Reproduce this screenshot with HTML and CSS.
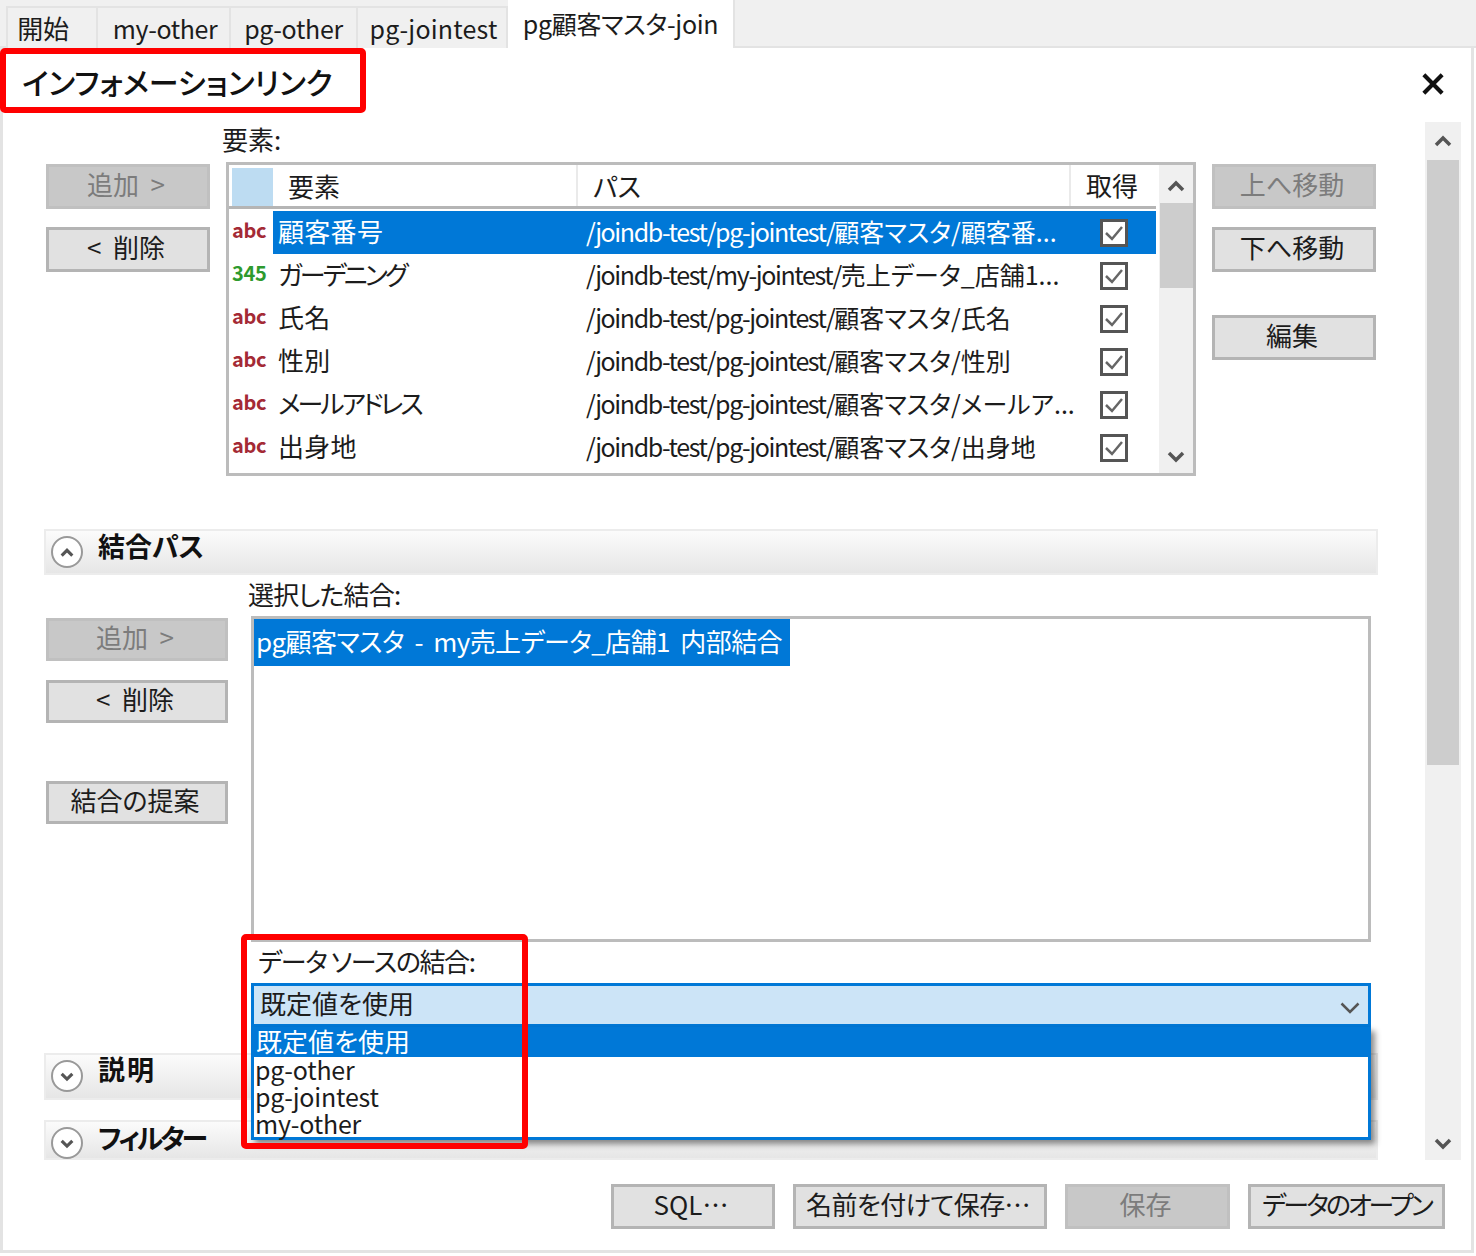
FILE: index.html
```html
<!DOCTYPE html>
<html lang="ja">
<head>
<meta charset="utf-8">
<title>インフォメーションリンク</title>
<link rel="stylesheet" href="styles.css">
</head>
<body>
<div class="app">
  <nav class="tabs">
    <div class="tab t-start">開始</div>
    <div class="tab t-my">my-other</div>
    <div class="tab t-pg">pg-other</div>
    <div class="tab t-joint">pg-jointest</div>
    <div class="tab active">pg顧客マスタ-join</div>
  </nav>
  <main class="panel">
    <header class="title-row">
      <h1 class="title">インフォメーションリンク</h1>
      <svg class="close" viewBox="0 0 24 24"><path d="M2 2 22 22M22 2 2 22"/></svg>
    </header>
    <div class="body">
      <div class="content">
        <section class="elements">
          <div class="el-buttons">
            <button class="btn disabled">追加 &nbsp;&gt;</button>
            <button class="btn">&lt;&nbsp; 削除</button>
          </div>
          <div class="el-center">
            <div class="label el-label">要素:</div>
            <div class="list">
              <div class="list-main">
                <div class="row head">
                  <div class="corner"></div>
                  <div class="cell name">要素</div>
                  <div class="cell path">パス</div>
                  <div class="cell get">取得</div>
                </div>
                <div class="row selected">
                  <div class="type abc">abc</div>
                  <div class="cell name">顧客番号</div>
                  <div class="cell path"><span class="pre">/joindb-test/pg-jointest/</span><span>顧客マスタ/顧客番...</span></div>
                  <div class="cell get"><svg class="check" viewBox="0 0 28 28"><rect x="1.5" y="1.5" width="25" height="25"/><path d="M6 14l6 6 10-12"/></svg></div>
                </div>
                <div class="row">
                  <div class="type num">345</div>
                  <div class="cell name kana">ガーデニング</div>
                  <div class="cell path"><span class="pre">/joindb-test/my-jointest/</span><span>売上データ_店舗1...</span></div>
                  <div class="cell get"><svg class="check" viewBox="0 0 28 28"><rect x="1.5" y="1.5" width="25" height="25"/><path d="M6 14l6 6 10-12"/></svg></div>
                </div>
                <div class="row">
                  <div class="type abc">abc</div>
                  <div class="cell name">氏名</div>
                  <div class="cell path"><span class="pre">/joindb-test/pg-jointest/</span><span>顧客マスタ/氏名</span></div>
                  <div class="cell get"><svg class="check" viewBox="0 0 28 28"><rect x="1.5" y="1.5" width="25" height="25"/><path d="M6 14l6 6 10-12"/></svg></div>
                </div>
                <div class="row">
                  <div class="type abc">abc</div>
                  <div class="cell name">性別</div>
                  <div class="cell path"><span class="pre">/joindb-test/pg-jointest/</span><span>顧客マスタ/性別</span></div>
                  <div class="cell get"><svg class="check" viewBox="0 0 28 28"><rect x="1.5" y="1.5" width="25" height="25"/><path d="M6 14l6 6 10-12"/></svg></div>
                </div>
                <div class="row">
                  <div class="type abc">abc</div>
                  <div class="cell name kana">メールアドレス</div>
                  <div class="cell path"><span class="pre">/joindb-test/pg-jointest/</span><span>顧客マスタ/メールア...</span></div>
                  <div class="cell get"><svg class="check" viewBox="0 0 28 28"><rect x="1.5" y="1.5" width="25" height="25"/><path d="M6 14l6 6 10-12"/></svg></div>
                </div>
                <div class="row">
                  <div class="type abc">abc</div>
                  <div class="cell name">出身地</div>
                  <div class="cell path"><span class="pre">/joindb-test/pg-jointest/</span><span>顧客マスタ/出身地</span></div>
                  <div class="cell get"><svg class="check" viewBox="0 0 28 28"><rect x="1.5" y="1.5" width="25" height="25"/><path d="M6 14l6 6 10-12"/></svg></div>
                </div>
              </div>
              <div class="scroll small">
                <svg class="arrow" viewBox="0 0 18 12"><path d="M2 10 9 3l7 7"/></svg>
                <div class="thumb small-thumb"></div>
                <div class="spacer"></div>
                <svg class="arrow" viewBox="0 0 18 12"><path d="M2 2l7 7 7-7"/></svg>
              </div>
            </div>
          </div>
          <div class="el-buttons right">
            <button class="btn disabled">上へ移動</button>
            <button class="btn">下へ移動</button>
            <button class="btn edit">編集</button>
          </div>
        </section>

        <div class="section join-head">
          <span class="circle"><svg viewBox="0 0 18 12"><path d="M3 9.500 9 3.500l6 6"/></svg></span>
          <span class="section-title">結合パス</span>
        </div>
        <section class="join">
          <div class="join-buttons">
            <button class="btn small-btn disabled">追加 &nbsp;&gt;</button>
            <button class="btn small-btn">&lt;&nbsp; 削除</button>
            <button class="btn small-btn suggest">結合の提案</button>
          </div>
          <div class="join-main">
            <div class="label join-label">選択した結合:</div>
            <div class="listbox">
              <span class="listbox-item">pg顧客マスタ&nbsp; -&nbsp; my売上データ_店舗1&nbsp; 内部結合</span>
            </div>
            <div class="label ds-label">データ ソースの結合:</div>
            <div class="combo">
              <div class="combo-box">
                <span>既定値を使用</span>
                <svg class="combo-arrow" viewBox="0 0 20 12"><path d="M1.500 1.500 10 10l8.500-8.500"/></svg>
              </div>
              <ul class="dropdown">
                <li class="opt on">既定値を使用</li>
                <li class="opt">pg-other</li>
                <li class="opt">pg-jointest</li>
                <li class="opt">my-other</li>
              </ul>
            </div>
          </div>
        </section>

        <div class="section desc">
          <span class="circle"><svg viewBox="0 0 18 12"><path d="M3 3l6 6 6-6"/></svg></span>
          <span class="section-title">説明</span>
        </div>
        <div class="section filter">
          <span class="circle"><svg viewBox="0 0 18 12"><path d="M3 3l6 6 6-6"/></svg></span>
          <span class="section-title">フィルター</span>
        </div>
      </div>
      <div class="scroll big">
        <svg class="arrow" viewBox="0 0 18 12"><path d="M2 10 9 3l7 7"/></svg>
        <div class="thumb big-thumb"></div>
        <div class="spacer"></div>
        <svg class="arrow" viewBox="0 0 18 12"><path d="M2 2l7 7 7-7"/></svg>
      </div>
    </div>
    <footer class="footer">
      <button class="btn f-sql">SQL…</button>
      <button class="btn f-save-as">名前を付けて保存…</button>
      <button class="btn f-save disabled">保存</button>
      <button class="btn f-open">データのオープン</button>
    </footer>
  </main>
  <div class="red red-title"></div>
  <div class="red red-join"></div>
</div>
</body>
</html>
```
FILE: styles.css
```css
* { box-sizing: border-box; }
html, body { margin: 0; padding: 0; background: #fff; }
body { font-family: "Noto Sans CJK JP", "Noto Sans", sans-serif; font-feature-settings: "palt"; color: #1c1c1c; font-size: 26px; }
button { font-family: inherit; font-feature-settings: inherit; color: inherit; }

.app { position: relative; width: 1476px; height: 1256px; overflow: hidden; }

/* tabs */
.tabs { display: flex; align-items: flex-end; height: 48px; background: #f0f0f0; padding-left: 6px; border-bottom: 2px solid #e3e3e3; }
.tab { height: 42px; text-align: center; line-height: 40px; font-size: 25px; letter-spacing: -.3px; background: #f0f0f0; border: 2px solid #e3e3e3; border-bottom: 0; border-left-width: 0; white-space: nowrap; margin-bottom: -2px; }
.t-start { width: 92px; border-left-width: 2px; font-size: 26px; padding-right: 18px; }
.t-my { width: 133px; padding-left: 3px; letter-spacing: -.4px; }
.t-pg { width: 127px; }
.t-joint { width: 150px; padding-left: 3px; letter-spacing: .2px; }
.tab.active { width: 227px; height: 48px; background: #fff; line-height: 47px; border-top: 0; }

/* panel */
.panel { width: 1474px; height: 1205px; background: #fff; border: 3px solid #e3e3e3; border-top: 0; }
.title-row { display: flex; justify-content: space-between; align-items: center; height: 74px; padding: 0 27px 0 19px; }
.title { margin: 0; font-size: 30px; font-weight: 500; color: #111; line-height: 36px; margin-top: -8px; white-space: nowrap; }
.close { width: 22px; height: 22px; margin-top: -3px; }
.close path { fill: none; stroke: #111; stroke-width: 4.500; }

.body { display: flex; height: 1038px; padding-left: 41px; }
.content { width: 1334px; }

/* scrollbars */
.scroll { display: flex; flex-direction: column; align-items: center; background: #f0f0f0; }
.scroll.big { width: 36px; height: 1038px; margin-left: 47px; padding-bottom: 10px; }
.scroll.big > .arrow:first-child { margin-top: 13px; margin-bottom: 13px; }
.big-thumb { width: 32px; height: 605px; }
.thumb { background: #cdcdcd; flex: none; }
.spacer { flex: 1; }
.arrow { width: 18px; height: 12px; flex: none; }
.arrow path { fill: none; stroke: #555; stroke-width: 3.500; }
.scroll.small { width: 37px; height: 308px; padding-bottom: 10px; margin-left: 3px; }
.scroll.small > .arrow:first-child { margin-top: 15px; margin-bottom: 11px; }
.small-thumb { width: 33px; height: 85px; }

/* elements */
.elements { display: grid; grid-template-columns: 164px 970px 164px; column-gap: 16px; padding-left: 2px; align-items: start; height: 354px; }
.el-buttons { display: flex; flex-direction: column; gap: 18px; padding-top: 42px; }
.btn { display: block; height: 45px; width: 164px; padding: 0 4px 5px 0; font-size: 26px; line-height: 34px; background: #e1e1e1; border: 3px solid #b4b4b4; border-radius: 0; white-space: nowrap; }
.btn.disabled { background: #c8c8c8; border-color: #c0c0c0; color: #7c7c7c; }
.edit { margin-top: 25px; }
.label { font-size: 26px; line-height: 36px; white-space: nowrap; }
.el-label { height: 40px; margin: -1px 0 0 -4px; padding-bottom: 0; }
.list { display: flex; width: 970px; height: 314px; margin-top: 1px; border: 3px solid #bcbcbc; }
.list-main { width: 927px; }
.row { display: grid; grid-template-columns: 44px 305px 493px 85px; height: 43px; align-items: center; white-space: nowrap; }
.row.head { height: 44px; border-bottom: 3px solid #b5b5b5; margin-bottom: 2px; align-items: stretch; }
.corner { background: #bddcf2; margin: 3px 0 0 3px; }
.cell { font-size: 26px; line-height: 32px; padding-bottom: 4px; }
.row .name { padding-left: 5px; letter-spacing: .3px; }
.row .kana { letter-spacing: -3px; }
.row .path { padding-left: 8px; font-size: 25px; }
.row .pre { letter-spacing: -1.4px; }
.row.head .cell { display: flex; align-items: center; justify-content: flex-start; padding: 0 0 0 15px; border-right: 2px solid #eaeaea; font-size: 26px; letter-spacing: 0; }
.row.head .get { border-right: 0; padding-bottom: 2px; }
.get { display: flex; justify-content: center; align-items: center; }
.row .get { padding-bottom: 0; }
.selected .name, .selected .path, .selected .get { background: #0078d7; color: #fff; height: 43px; }
.selected .cell { display: flex; align-items: center; }
.type { font-size: 20px; font-weight: 700; padding-left: 3px; line-height: 1; margin-top: -6px; letter-spacing: -.3px; }
.abc { color: #a42a35; }
.num { color: #2e9a2e; }
.check { width: 28px; height: 28px; }
.check rect { fill: #fff; stroke: #555; stroke-width: 3; }
.check path { fill: none; stroke: #666; stroke-width: 2.500; }

/* section heads */
.section { display: flex; align-items: flex-start; width: 1334px; background: linear-gradient(#fbfbfb, #e6e6e6); border: 2px solid #ececec; }
.join-head { height: 46px; margin-top: 53px; }
.section-title { font-size: 27px; font-weight: 700; line-height: 30px; color: #111; margin-left: 15px; }
.circle { display: flex; align-items: center; justify-content: center; width: 32px; height: 32px; margin: 5px 0 0 5px; border: 2px solid #999; border-radius: 50%; background: #fff; flex: none; }
.circle svg { width: 16px; height: 11px; }
.circle path { fill: none; stroke: #555; stroke-width: 3.500; }
.desc { height: 47px; margin-top: 26px; }
.filter { height: 40px; margin-top: 20px; }
.filter .section-title { margin-top: 1px; letter-spacing: -3px; }
.desc .section-title { margin-top: -1px; letter-spacing: 2px; }

/* join */
.join { display: grid; grid-template-columns: 182px 1120px; column-gap: 23px; padding-left: 2px; }
.join-buttons { display: flex; flex-direction: column; padding-top: 43px; }
.small-btn { width: 182px; height: 43px; line-height: 32px; }
.small-btn + .small-btn { margin-top: 19px; padding-bottom: 7px; }
.small-btn.suggest { margin-top: 58px; }
.join-main { width: 1120px; }
.join-label { height: 41px; margin-left: -3px; letter-spacing: -.8px; padding-top: 1px; }
.listbox { height: 326px; border: 3px solid #bcbcbc; }
.listbox-item { display: inline-block; height: 47px; line-height: 44px; background: #0078d7; color: #fff; padding: 0 8px 0 2px; font-size: 26px; letter-spacing: -.6px; white-space: nowrap; vertical-align: top; }
.ds-label { height: 41px; padding: 1px 0 0 7px; letter-spacing: -1.4px; }
.combo { position: relative; }
.combo-box { display: flex; align-items: center; justify-content: space-between; height: 44px; padding: 0 8px 4px 6px; background: #cce4f7; border: 3px solid #0078d7; font-size: 26px; line-height: 34px; }
.combo-arrow { width: 20px; height: 12px; margin-top: 9px; }
.combo-arrow path { fill: none; stroke: #555; stroke-width: 2.500; }
.dropdown { position: absolute; left: 0; right: 0; top: 100%; margin: 0; padding: 0; list-style: none; height: 113px; background: #fff; border: 3px solid #0078d7; border-top: 0; box-shadow: 4px 4px 6px rgba(0, 0, 0, .45); z-index: 2; }
.opt { height: 27px; line-height: 25px; padding-left: 1px; font-size: 25px; letter-spacing: -.2px; }
.opt.on { height: 30px; line-height: 28px; margin: 0 -3px; padding-left: 5px; background: #0078d7; color: #fff; font-size: 26px; letter-spacing: 0; }

/* footer */
.footer { display: flex; gap: 18px; padding: 24px 0 0 608px; }
.f-sql { width: 164px; }
.f-save-as { width: 254px; letter-spacing: -.6px; }
.f-save { width: 165px; }
.f-open { width: 197px; padding-right: 0; letter-spacing: -3px; }

/* callouts */
.red { position: absolute; border: 6px solid #f00; border-radius: 5px; z-index: 5; }
.red-title { left: 0; top: 48px; width: 366px; height: 65px; }
.red-join { left: 241px; top: 934px; width: 287px; height: 215px; }
```
